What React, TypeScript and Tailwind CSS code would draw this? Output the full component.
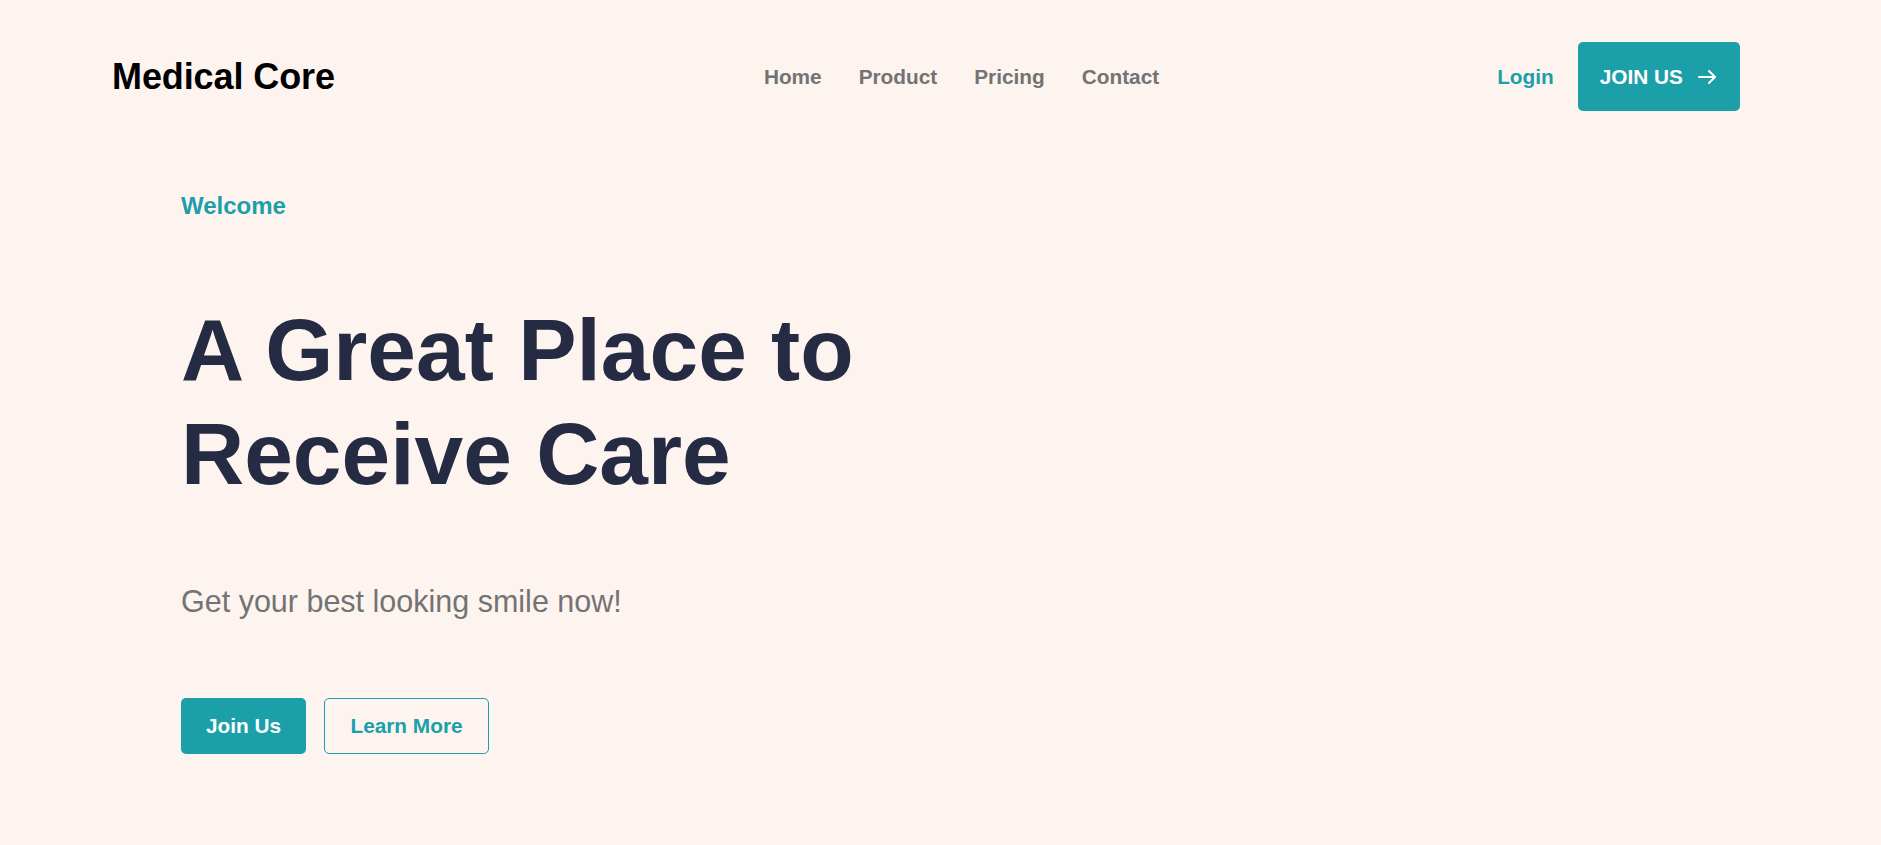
const NAV_LINKS = ["Home", "Product", "Pricing", "Contact"]

function ArrowIcon() {
  return (
    <svg width="18" height="14" viewBox="0 0 18 14" fill="none" stroke="currentColor" strokeWidth="2" strokeLinecap="round" strokeLinejoin="round">
      <path d="M1 7h16" />
      <path d="M11 1l6 6-6 6" />
    </svg>
  )
}

export default function App() {
  return (
    <div className="min-h-screen bg-[#fdf4ef] pt-[42px] font-['Liberation_Sans',Arial,sans-serif]">
      {/* header */}
      <header className="flex items-center h-[69px] pl-[112px]">
        <div className="text-[36px] font-bold text-black leading-none tracking-[-0.1px]">Medical Core</div>

        <nav className="flex items-center gap-[37px] ml-[429px]">
          {NAV_LINKS.map((link) => (
            <a key={link} href="#" className="text-[20.8px] font-bold text-[#737373]">
              {link}
            </a>
          ))}
        </nav>

        <a href="#" className="ml-[338px] text-[20.8px] font-bold text-[#1b9fa9]">
          Login
        </a>
        <button className="ml-[24px] flex items-center gap-[15px] h-[69px] w-[162px] pl-[22px] rounded-[5px] bg-[#1b9fa9] text-white text-[20.8px] font-bold">
          JOIN US
          <ArrowIcon />
        </button>
      </header>

      {/* hero */}
      <section className="pl-[181px] pt-[77px]">
        <p className="text-[24px] leading-[36px] font-bold text-[#1b9fa9]">Welcome</p>

        <h1 className="mt-[74px] text-[87.5px] leading-[104px] font-bold text-[#252b42]">
          A Great Place to
          <br />
          Receive Care
        </h1>

        <p className="mt-[73px] text-[30.5px] leading-[45px] text-[#737373]">Get your best looking smile now!</p>

        <div className="mt-[74px] flex items-center gap-[18px]">
          <button className="h-[56px] w-[125px] rounded-[5px] bg-[#1b9fa9] text-white text-[20.8px] font-bold">
            Join Us
          </button>
          <button className="h-[56px] w-[165px] rounded-[5px] border border-[#1b9fa9] text-[#1b9fa9] text-[20.8px] font-bold">
            Learn More
          </button>
        </div>
      </section>
    </div>
  )
}
